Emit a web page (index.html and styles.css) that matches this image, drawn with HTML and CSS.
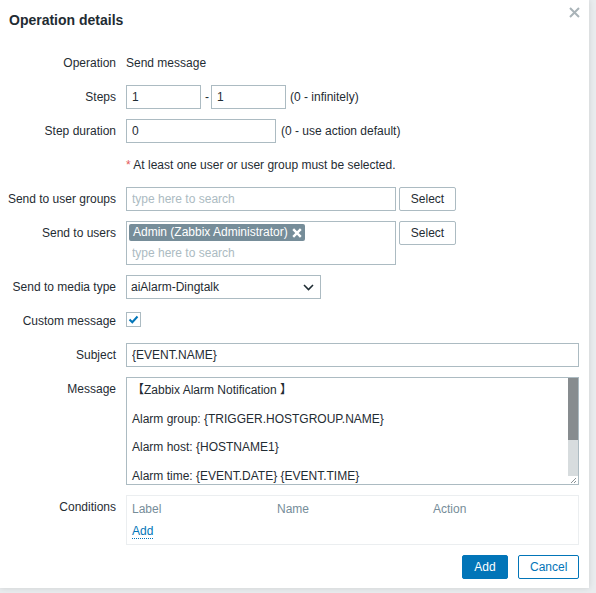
FILE: index.html
```html
<!DOCTYPE html>
<html>
<head>
<meta charset="utf-8">
<link rel="stylesheet" href="styles.css">
</head>
<body>
<div class="dialog">
  <div class="header">
    <h4 class="title">Operation details</h4>
    <span class="close"><svg width="11" height="11" viewBox="0 0 11 11"><path d="M1 1L10 10M10 1L1 10" stroke="#a9b3b8" stroke-width="2"/></svg></span>
  </div>
  <div class="form">
    <div class="label">Operation</div>
    <div class="field text">Send message</div>

    <div class="label">Steps</div>
    <div class="field row">
      <input class="input w75" value="1"><span class="dash">-</span><input class="input w75" value="1"><span class="hint">(0 - infinitely)</span>
    </div>

    <div class="label">Step duration</div>
    <div class="field row">
      <input class="input w150" value="0"><span class="hint h5">(0 - use action default)</span>
    </div>

    <div class="label"></div>
    <div class="field text"><span class="req">*</span> At least one user or user group must be selected.</div>

    <div class="label">Send to user groups</div>
    <div class="field row">
      <input class="input w270" placeholder="type here to search"><button class="btn-alt">Select</button>
    </div>

    <div class="label">Send to users</div>
    <div class="field row top">
      <div class="multi">
        <span class="tag">Admin (Zabbix Administrator)<svg class="tag-x" width="10" height="10" viewBox="0 0 10 10"><path d="M1.2 1.2L8.8 8.8M8.8 1.2L1.2 8.8" stroke="#fff" stroke-width="2.4"/></svg></span>
        <input class="multi-input" placeholder="type here to search">
      </div>
      <button class="btn-alt">Select</button>
    </div>

    <div class="label">Send to media type</div>
    <div class="field">
      <div class="select"><span>aiAlarm-Dingtalk</span><svg width="11" height="7" viewBox="0 0 11 7"><path d="M1 1L5.5 5.5L10 1" fill="none" stroke="#1f2c33" stroke-width="1.6"/></svg></div>
    </div>

    <div class="label">Custom message</div>
    <div class="field">
      <span class="checkbox"><svg width="13" height="13" viewBox="0 0 13 13"><path d="M2.5 6.5L5.3 9.2L10.5 3.5" fill="none" stroke="#0275b8" stroke-width="2"/></svg></span>
    </div>

    <div class="label">Subject</div>
    <div class="field"><input class="input full" value="{EVENT.NAME}"></div>

    <div class="label">Message</div>
    <div class="field">
      <div class="msgbox">
        <textarea class="textarea">【Zabbix Alarm Notification 】

Alarm group: {TRIGGER.HOSTGROUP.NAME}

Alarm host: {HOSTNAME1}

Alarm time: {EVENT.DATE} {EVENT.TIME}

Alarm level: {TRIGGER.SEVERITY}

Alarm info: {TRIGGER.NAME}</textarea>
        <div class="scrollbar">
          <div class="thumb"></div>
          <div class="track"></div>
          <div class="corner"><svg width="10" height="8" viewBox="0 0 10 8"><path d="M3 7L8 2M6 7L8 5" stroke="#8a9296" stroke-width="1"/></svg></div>
        </div>
      </div>
    </div>

    <div class="label">Conditions</div>
    <div class="field">
      <div class="conditions">
        <div class="cond-head"><span class="c1">Label</span><span class="c2">Name</span><span class="c3">Action</span></div>
        <div class="cond-add"><a class="link">Add</a></div>
      </div>
    </div>
  </div>
  <div class="footer">
    <button class="btn-primary">Add</button>
    <button class="btn-secondary">Cancel</button>
  </div>
</div>
</body>
</html>
```
FILE: styles.css
```css
* { box-sizing: border-box; }
html, body { margin: 0; padding: 0; }
body {
  background: #e9ecee;
  font-family: Arial, "Liberation Sans", "Noto Sans CJK SC", sans-serif;
  font-size: 12px;
  color: #1f2c33;
  width: 596px;
  height: 593px;
  overflow: hidden;
}
.dialog {
  width: 589px;
  height: 588px;
  background: #fff;
  box-shadow: 0 0 6px rgba(0,0,0,0.12);
}
.header {
  display: flex;
  justify-content: space-between;
  align-items: flex-start;
  height: 51px;
  padding: 11px 9px 0 9px;
}
.title {
  margin: 0;
  font-size: 14px;
  font-weight: bold;
  line-height: 18px;
  color: #1f2c33;
}
.close {
  display: block;
  margin-top: -4px;
  line-height: 0;
}
.form {
  display: grid;
  grid-template-columns: 116px 453px;
  column-gap: 10px;
  row-gap: 10px;
}
.label {
  text-align: right;
  line-height: 24px;
  white-space: nowrap;
}
.field { min-height: 24px; }
.text { line-height: 24px; }
.row { display: flex; align-items: center; }
.row.top { align-items: flex-start; }
.input {
  height: 24px;
  border: 1px solid #acbbc2;
  padding: 0 5px;
  font: inherit;
  color: #1f2c33;
  background: #fff;
  outline: none;
}
.input::placeholder, .multi-input::placeholder { color: #acbbc2; }
.w75 { width: 75px; }
.w150 { width: 150px; }
.w270 { width: 270px; }
.full { width: 453px; }
.dash { margin: 0 2px 0 4px; }
.hint { margin-left: 4px; }
.h5 { margin-left: 5px; }
.req { color: #e45959; }
.btn-alt {
  margin-left: 3px;
  width: 57px;
  height: 24px;
  border: 1px solid #acbbc2;
  background: #fff;
  font: inherit;
  color: #1f2c33;
  border-radius: 2px;
  padding: 0;
}
.multi {
  width: 270px;
  height: 44px;
  border: 1px solid #acbbc2;
  padding: 2px 2px 0 2px;
  display: flex;
  flex-direction: column;
  align-items: flex-start;
}
.tag {
  display: inline-flex;
  align-items: center;
  height: 17px;
  background: #768d99;
  color: #fff;
  border-radius: 2px;
  padding: 0 3px 0 4px;
  line-height: 17px;
}
.tag-x { margin-left: 4px; }
.multi-input {
  border: none;
  outline: none;
  font: inherit;
  height: 20px;
  margin-top: 2px;
  padding: 0 3px;
  width: 260px;
  color: #1f2c33;
}
.select {
  width: 195px;
  height: 24px;
  border: 1px solid #acbbc2;
  display: flex;
  align-items: center;
  justify-content: space-between;
  padding: 0 6px 0 4px;
}
.checkbox {
  display: flex;
  align-items: center;
  justify-content: center;
  width: 15px;
  height: 15px;
  border: 1px solid #acbbc2;
  margin-top: 3px;
}
.msgbox {
  display: flex;
  width: 453px;
  height: 108px;
  border: 1px solid #acbbc2;
}
.textarea {
  flex: 1;
  display: block;
  border: none;
  padding: 5px 5px;
  font-family: Arial, "Liberation Sans", "Noto Sans CJK SC", sans-serif;
  font-size: 12px;
  line-height: 14.3px;
  color: #1f2c33;
  resize: none;
  overflow: hidden;
  outline: none;
  margin: 0;
}
.scrollbar {
  width: 10px;
  display: flex;
  flex-direction: column;
}
.thumb { height: 62px; background: #878c8f; }
.track { flex: 1; background: #d7dcde; }
.corner { height: 8px; background: #fff; line-height: 0; }
.conditions {
  width: 453px;
  height: 50px;
  border: 1px solid #ebeef0;
  padding: 6px 5px 5px 5px;
}
.cond-head { display: flex; line-height: 14px; color: #768d99; }
.c1 { width: 145px; }
.c2 { width: 156px; }
.cond-add { margin-top: 8px; line-height: 14px; }
.link {
  color: #0275b8;
  border-bottom: 1px dotted #0275b8;
  cursor: pointer;
}
.footer {
  display: flex;
  justify-content: flex-end;
  gap: 10px;
  padding: 10px 10px 0 0;
}
.btn-primary, .btn-secondary {
  height: 24px;
  font: inherit;
  border-radius: 2px;
  padding: 0 11px;
}
.btn-primary {
  background: #0275b8;
  border: 1px solid #0275b8;
  color: #fff;
  width: 46px;
}
.btn-secondary {
  background: #fff;
  border: 1px solid #0275b8;
  color: #0275b8;
  width: 61px;
}
```
